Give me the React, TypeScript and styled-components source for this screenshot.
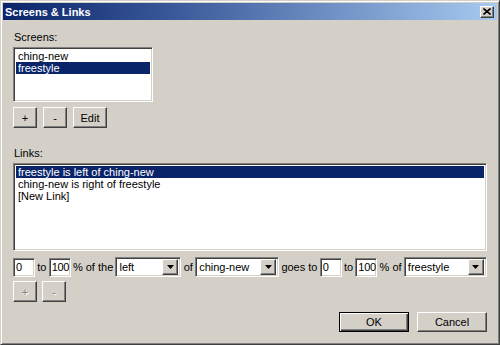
import React, {FC} from 'react';
import styled, {createGlobalStyle, css} from 'styled-components';

const GlobalStyle = createGlobalStyle`
  html, body {
    margin: 0;
    padding: 0;
    background: #d4d0c8;
  }
  * {
    box-sizing: border-box;
  }
`

const colors = {
  face: '#d4d0c8',
  light: '#ffffff',
  shadow: '#808080',
  dark: '#404040',
  select: '#0a246a',
}

const raised = css`
  border: 1px solid;
  border-color: ${colors.light} ${colors.dark} ${colors.dark} ${colors.light};
  box-shadow: inset -1px -1px ${colors.shadow}, inset 1px 1px ${colors.face};
`

const sunken = css`
  border: 1px solid;
  border-color: ${colors.shadow} ${colors.light} ${colors.light} ${colors.shadow};
  box-shadow: inset 1px 1px ${colors.dark}, inset -1px -1px ${colors.face};
`

const Window = styled.div`
  width: 500px;
  height: 345px;
  background: ${colors.face};
  border: 1px solid;
  border-color: ${colors.face} ${colors.dark} ${colors.dark} ${colors.face};
  box-shadow: inset 1px 1px ${colors.light}, inset -1px -1px ${colors.shadow};
  padding: 2px;
  font-family: "Liberation Sans", Arial, sans-serif;
  font-size: 11px;
  color: #000;
  display: flex;
  flex-direction: column;
`

const TitleBar = styled.div`
  height: 17px;
  display: flex;
  align-items: center;
  justify-content: space-between;
  padding: 0 3px 0 2px;
  background: linear-gradient(to right, #0a246a 0%, #3a5a9a 35%, #a6caf0 100%);
  color: #fff;
  font-weight: bold;
  font-size: 11px;
`

const CloseBtn = styled.div`
  ${raised};
  width: 14px;
  height: 12px;
  background: ${colors.face};
  display: flex;
  align-items: center;
  justify-content: center;
`

const Body = styled.div`
  flex: 1;
  display: flex;
  flex-direction: column;
  padding: 0 10px;
`

interface LabelProps {
  top?: number
}

const GroupLabel = styled.div<LabelProps>`
  height: 13px;
  line-height: 13px;
  margin-top: ${p => p.top || 0}px;
  margin-bottom: 3px;
  padding-left: 1px;
`

interface ListProps {
  w: number,
  h: number,
}

const ListBox = styled.div<ListProps>`
  ${sunken};
  width: ${p => p.w}px;
  height: ${p => p.h}px;
  background: #fff;
  padding: 2px;
`

const ListItem = styled.div<{selected?: boolean}>`
  height: 12px;
  line-height: 12px;
  padding-left: 2px;
  white-space: nowrap;
  ${p => p.selected && css`
    background: ${colors.select};
    color: #fff;
  `}
`

interface RowProps {
  top: number,
  gap?: number,
  justify?: string,
}

const ButtonRow = styled.div<RowProps>`
  display: flex;
  align-items: center;
  margin-top: ${p => p.top}px;
  gap: ${p => p.gap || 0}px;
  justify-content: ${p => p.justify || 'flex-start'};
`

interface BtnProps {
  w: number,
  h?: number,
  disabled?: boolean,
  isDefault?: boolean,
}

const Button = styled.div<BtnProps>`
  ${raised};
  width: ${p => p.w}px;
  height: ${p => p.h || 21}px;
  background: ${colors.face};
  display: flex;
  align-items: center;
  justify-content: center;
  font-size: 11px;
  ${p => p.disabled && css`
    color: ${colors.shadow};
    text-shadow: 1px 1px ${colors.light};
  `}
  ${p => p.isDefault && css`
    border: 1px solid #000;
    box-shadow: inset 1px 1px ${colors.light}, inset -1px -1px ${colors.dark}, inset -2px -2px ${colors.shadow};
  `}
`

const FormRow = styled.div`
  display: flex;
  align-items: center;
  justify-content: space-between;
  margin-top: 6px;
  height: 20px;
`

const TextField = styled.div<{w: number}>`
  ${sunken};
  width: ${p => p.w}px;
  height: 19px;
  background: #fff;
  padding: 0 1px 0 2px;
  line-height: 17px;
  font-size: 11px;
  letter-spacing: -0.3px;
  overflow: hidden;
`

const Combo = styled.div<{w: number}>`
  ${sunken};
  width: ${p => p.w}px;
  height: 20px;
  background: #fff;
  padding: 2px;
  display: flex;
  align-items: center;
`

const ComboText = styled.div`
  flex: 1;
  padding-left: 1px;
  white-space: nowrap;
`

const ComboArrow = styled.div`
  ${raised};
  width: 16px;
  height: 16px;
  background: ${colors.face};
  display: flex;
  align-items: center;
  justify-content: center;
`

const Text = styled.span`
  white-space: nowrap;
`

const Arrow: FC = () => (
  <ComboArrow>
    <svg width="7" height="4" viewBox="0 0 7 4">
      <path d="M0 0H7L3.5 4Z" fill="#000"/>
    </svg>
  </ComboArrow>
)

const ComboBox: FC<{w: number, value: string}> = ({w, value}) => (
  <Combo w={w}>
    <ComboText>{value}</ComboText>
    <Arrow/>
  </Combo>
)

const screens = ['ching-new', 'freestyle']
const links = ['freestyle is left of ching-new', 'ching-new is right of freestyle', '[New Link]']

const App: FC = () => {
  return (
    <>
      <GlobalStyle/>
      <Window>
        <TitleBar>
          <span>Screens &amp; Links</span>
          <CloseBtn>
            <svg width="8" height="7" viewBox="0 0 8 7">
              <path d="M0.5 0.5L7.5 6.5M7.5 0.5L0.5 6.5" stroke="#000" strokeWidth="1.6"/>
            </svg>
          </CloseBtn>
        </TitleBar>
        <Body>
          <GroupLabel top={11}>Screens:</GroupLabel>
          <ListBox w={140} h={55}>
            {screens.map((s, i) => <ListItem key={s} selected={i === 1}>{s}</ListItem>)}
          </ListBox>
          <ButtonRow top={5} gap={6}>
            <Button w={24}>+</Button>
            <Button w={24}>-</Button>
            <Button w={34}>Edit</Button>
          </ButtonRow>
          <GroupLabel top={19}>Links:</GroupLabel>
          <ListBox w={474} h={88}>
            {links.map((l, i) => <ListItem key={l} selected={i === 0}>{l}</ListItem>)}
          </ListBox>
          <FormRow>
            <TextField w={22}>0</TextField>
            <Text>to</Text>
            <TextField w={22}>100</TextField>
            <Text>% of the</Text>
            <ComboBox w={66} value="left"/>
            <Text>of</Text>
            <ComboBox w={84} value="ching-new"/>
            <Text>goes to</Text>
            <TextField w={22}>0</TextField>
            <Text>to</Text>
            <TextField w={22}>100</TextField>
            <Text>% of</Text>
            <ComboBox w={83} value="freestyle"/>
          </FormRow>
          <ButtonRow top={4} gap={5}>
            <Button w={24} disabled>+</Button>
            <Button w={24} disabled>-</Button>
          </ButtonRow>
          <ButtonRow top={10} gap={8} justify="flex-end">
            <Button w={70} h={20} isDefault>OK</Button>
            <Button w={70} h={20}>Cancel</Button>
          </ButtonRow>
        </Body>
      </Window>
    </>
  );
};

export default App;
